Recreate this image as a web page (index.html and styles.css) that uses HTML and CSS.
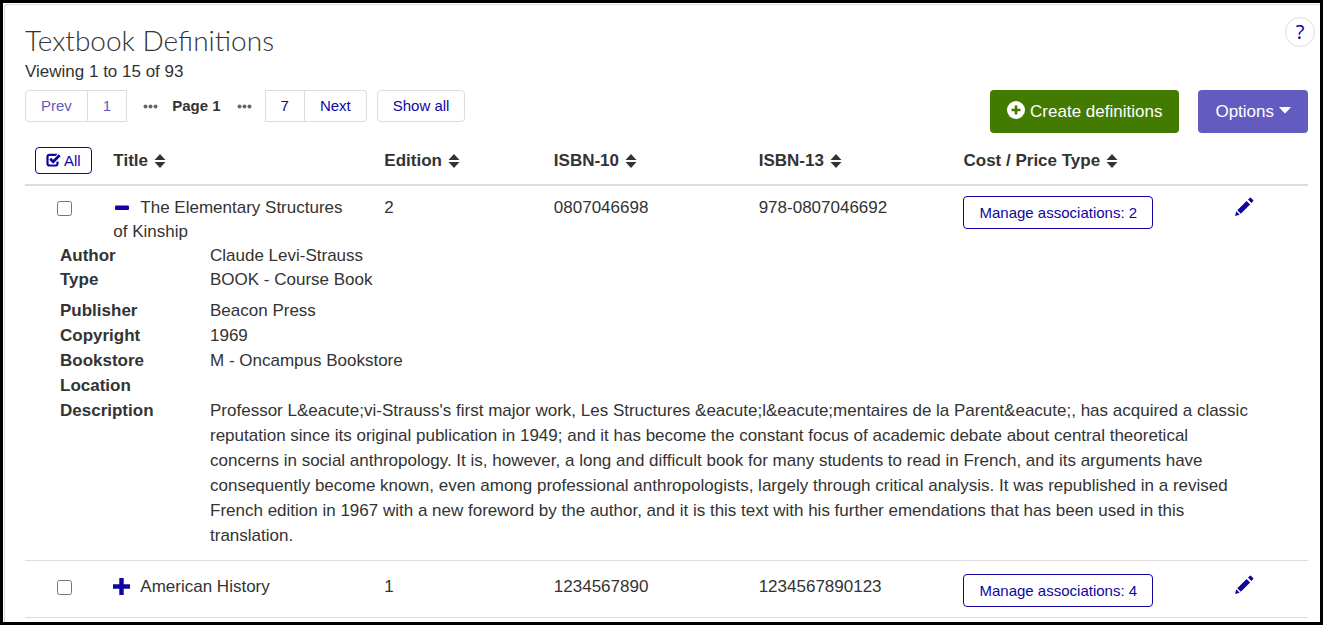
FILE: index.html
```html
<!DOCTYPE html>
<html lang="en">
<head>
<meta charset="utf-8">
<title>Textbook Definitions</title>
<link rel="stylesheet" href="styles.css">
</head>
<body>
<svg class="defs" aria-hidden="true">
  <symbol id="sort" viewBox="0 0 12 14"><path d="M6 0 11.500 6H.5zM.5 8h11L6 14z"/></symbol>
  <symbol id="pencil" viewBox="0 0 20 20"><path d="M1 19 2.300 14.300 5.700 17.700zM3.300 13.200 12.600 3.900 16.100 7.400 6.800 16.700zM14 2.600 15.700.9Q16.400.3 17.100.9L19.100 2.900Q19.700 3.600 19.100 4.300L17.400 6z"/></symbol>
</svg>
<main class="card">
  <button class="help" type="button" aria-label="Help">?</button>
  <h1 class="title">Textbook Definitions</h1>
  <p class="summary">Viewing 1 to 15 of 93</p>
  <div class="toolbar">
    <nav class="pager" aria-label="Pages">
      <div class="group group-start">
        <button class="page" type="button" disabled>Prev</button>
        <button class="page" type="button" disabled>1</button>
      </div>
      <svg class="dots" viewBox="0 0 15 5" aria-hidden="true"><circle cx="2.500" cy="2.500" r="2"/><circle cx="7.500" cy="2.500" r="2"/><circle cx="12.500" cy="2.500" r="2"/></svg>
      <strong class="current">Page 1</strong>
      <svg class="dots" viewBox="0 0 15 5" aria-hidden="true"><circle cx="2.500" cy="2.500" r="2"/><circle cx="7.500" cy="2.500" r="2"/><circle cx="12.500" cy="2.500" r="2"/></svg>
      <div class="group group-end">
        <button class="page" type="button">7</button>
        <button class="page" type="button">Next</button>
      </div>
      <button class="page page-all" type="button">Show all</button>
    </nav>
    <div class="actions">
      <button class="action create" type="button">
        <svg class="plus-circle" viewBox="0 0 18 22" aria-hidden="true"><circle cx="9" cy="9" r="9" fill="#fff"/><path d="M7.700 4.500h2.600v3.200h3.200v2.600h-3.200v3.200H7.700v-3.200H4.500V7.700h3.200z" fill="#437a00"/></svg>
        Create definitions
      </button>
      <button class="action options" type="button">
        Options
        <svg class="caret" viewBox="0 0 12 9" aria-hidden="true"><path d="M1 0h10q1 0 .5.8L6.600 6q-.6.6-1.200 0L.5.8Q0 0 1 0z"/></svg>
      </button>
    </div>
  </div>

  <table class="list">
    <colgroup><col class="c-check"><col class="c-title"><col class="c-edition"><col class="c-isbn"><col class="c-isbn"><col class="c-cost"><col class="c-edit"></colgroup>
    <thead>
      <tr>
        <th><button class="all" type="button"><svg class="check" viewBox="0 0 15 14" aria-hidden="true"><path d="M11.500 1.900H3.500Q1.500 1.900 1.500 3.900V10.500Q1.500 12.500 3.500 12.500H9.500Q11.500 12.500 11.500 10.500V8.500" fill="none" stroke="currentColor" stroke-width="2.200"/><path d="M4.200 5.800 7.200 8.700 13.600 2.200" fill="none" stroke="#fff" stroke-width="4.500"/><path d="M4.200 5.800 7.200 8.700 13.600 2.200" fill="none" stroke="currentColor" stroke-width="2.800"/></svg>All</button></th>
        <th>Title <svg class="sort"><use href="#sort"/></svg></th>
        <th>Edition <svg class="sort"><use href="#sort"/></svg></th>
        <th>ISBN-10 <svg class="sort"><use href="#sort"/></svg></th>
        <th>ISBN-13 <svg class="sort"><use href="#sort"/></svg></th>
        <th>Cost / Price Type <svg class="sort"><use href="#sort"/></svg></th>
        <th></th>
      </tr>
    </thead>
    <tbody>
      <tr class="book expanded">
        <td class="pick"><input class="box" type="checkbox" aria-label="Select The Elementary Structures of Kinship"></td>
        <td class="name"><button class="toggle" type="button" aria-label="Collapse"><svg class="mark" viewBox="0 0 17 17"><path d="M3 6.500h12q1 0 1 1v2.500q0 1-1 1H3q-1 0-1-1V7.500q0-1 1-1z"/></svg></button>The Elementary Structures of Kinship</td>
        <td>2</td>
        <td>0807046698</td>
        <td>978-0807046692</td>
        <td><button class="manage" type="button">Manage associations: 2</button></td>
        <td><button class="edit" type="button" aria-label="Edit"><svg class="pencil"><use href="#pencil"/></svg></button></td>
      </tr>
      <tr>
        <td class="detail" colspan="7">
          <dl class="facts facts-first">
            <dt>Author</dt><dd>Claude Levi-Strauss</dd>
            <dt>Type</dt><dd>BOOK - Course Book</dd>
          </dl>
          <dl class="facts">
            <dt>Publisher</dt><dd>Beacon Press</dd>
            <dt>Copyright</dt><dd>1969</dd>
            <dt>Bookstore Location</dt><dd>M - Oncampus Bookstore</dd>
            <dt>Description</dt><dd>Professor L&amp;eacute;vi-Strauss's first major work, Les Structures &amp;eacute;l&amp;eacute;mentaires de la Parent&amp;eacute;, has acquired a classic reputation since its original publication in 1949; and it has become the constant focus of academic debate about central theoretical concerns in social anthropology. It is, however, a long and difficult book for many students to read in French, and its arguments have consequently become known, even among professional anthropologists, largely through critical analysis. It was republished in a revised French edition in 1967 with a new foreword by the author, and it is this text with his further emendations that has been used in this translation.</dd>
          </dl>
        </td>
      </tr>
      <tr class="book">
        <td class="pick"><input class="box" type="checkbox" aria-label="Select American History"></td>
        <td class="name"><button class="toggle" type="button" aria-label="Expand"><svg class="mark" viewBox="0 0 17 17"><path d="M6.300 0h4.400v6.300H17v4.400h-6.300V17H6.300v-6.300H0V6.300h6.300z"/></svg></button>American History</td>
        <td>1</td>
        <td>1234567890</td>
        <td>1234567890123</td>
        <td><button class="manage" type="button">Manage associations: 4</button></td>
        <td><button class="edit" type="button" aria-label="Edit"><svg class="pencil"><use href="#pencil"/></svg></button></td>
      </tr>
    </tbody>
  </table>
</main>
</body>
</html>
```
FILE: styles.css
```css
* { box-sizing: border-box; }

body {
  margin: 0;
  min-height: 100vh;
  padding: 1px 0 0 1px;
  border: 3px solid #000;
  background: #fff;
  color: #333;
  font: 17px/25px "Liberation Sans", Arial, sans-serif;
}

button {
  margin: 0;
  font: inherit;
  color: #10069f;
  background: #fff;
  cursor: pointer;
}

svg { fill: currentColor; }
.defs { position: absolute; width: 0; height: 0; }

.card {
  position: relative;
  padding: 20px 12px 4px 20px;
  border: solid #ddd;
  border-width: 1px 0 0 1px;
  border-top-left-radius: 4px;
}

.help {
  position: absolute;
  top: 12px;
  right: 5px;
  width: 30px;
  height: 30px;
  padding: 0;
  border: 1px solid #ddd;
  border-radius: 50%;
  font: 20px/28px "Noto Sans", sans-serif;
}

.title { margin: 0; font: 300 28px/30px Lato, sans-serif; }
.summary { margin: 4px 0 6px; }

.toolbar { display: flex; justify-content: space-between; align-items: flex-start; }
.pager { display: flex; align-items: center; height: 32px; font-size: 15px; }
.group { display: flex; }
.current { line-height: 30px; }
.page {
  height: 32px;
  padding: 0 15px;
  border: 1px solid #ddd;
  line-height: 30px;
}
.page:disabled { color: #645bc0; cursor: default; }
.page + .page { border-left: 0; }
.group-start .page:first-child { border-radius: 4px 0 0 4px; }
.group-end .page:last-child { border-radius: 0 4px 4px 0; }
.page-all { margin-left: 10px; border-radius: 4px; }
.dots { width: 15px; height: 5px; margin: 0 14px 0 16px; color: #666; }
.dots + .group { margin-left: -1px; }

.actions { display: flex; gap: 19px; }
.action {
  display: flex;
  align-items: center;
  gap: 5px;
  height: 43px;
  padding: 0 17px;
  border: 0;
  border-radius: 4px;
  color: #fff;
}
.create { background: #437a00; }
.options { background: #645bc0; }
.plus-circle { width: 18px; height: 22px; }
.caret { width: 12px; height: 9px; }

.list { width: 100%; border-spacing: 0; table-layout: fixed; }
.c-check { width: 6.1%; }
.c-title { width: 21.1%; }
.c-edition { width: 13.2%; }
.c-isbn { width: 15.95%; }
.c-cost { width: 21.1%; }
.c-edit { width: 6.5%; }

.list th {
  height: 53px;
  padding: 3px 10px 0;
  border-bottom: 2px solid #ddd;
  text-align: left;
}
.sort { width: 12px; height: 14px; margin-left: 1px; vertical-align: -2px; }
.all {
  display: flex;
  align-items: center;
  gap: 3px;
  height: 27px;
  padding: 0 10px;
  border: 1px solid #10069f;
  border-radius: 4px;
  font-size: 15px;
  font-weight: normal;
}
.check { width: 15px; height: 14px; }

.book td { padding: 13px 10px 10px; border-bottom: 1px solid #ddd; vertical-align: top; }
.book.expanded td { padding: 10px 10px 0; border: 0; line-height: 24px; }
.book.expanded .name { padding-right: 25px; }
.book .pick { text-align: center; }
.box { width: 15px; height: 15px; margin: 0; vertical-align: -3px; }

.toggle { padding: 0; border: 0; margin-right: 10px; line-height: 17px; vertical-align: -3px; }
.mark { display: block; width: 17px; height: 17px; }
.manage {
  display: block;
  height: 33px;
  padding: 0 15px;
  border: 1px solid #10069f;
  border-radius: 4px;
  font-size: 15px;
}
.edit { display: block; padding: 1px 0 0; border: 0; }
.pencil { display: block; width: 20px; height: 20px; }

.detail { padding: 0 50px 12px 35px; border-bottom: 1px solid #ddd; }
.facts { display: grid; grid-template-columns: 100px 1fr; column-gap: 50px; margin: 0; }
.facts-first { margin-bottom: 6px; line-height: 24px; }
.facts dt { font-weight: bold; }
.facts dd { margin: 0; }
```
